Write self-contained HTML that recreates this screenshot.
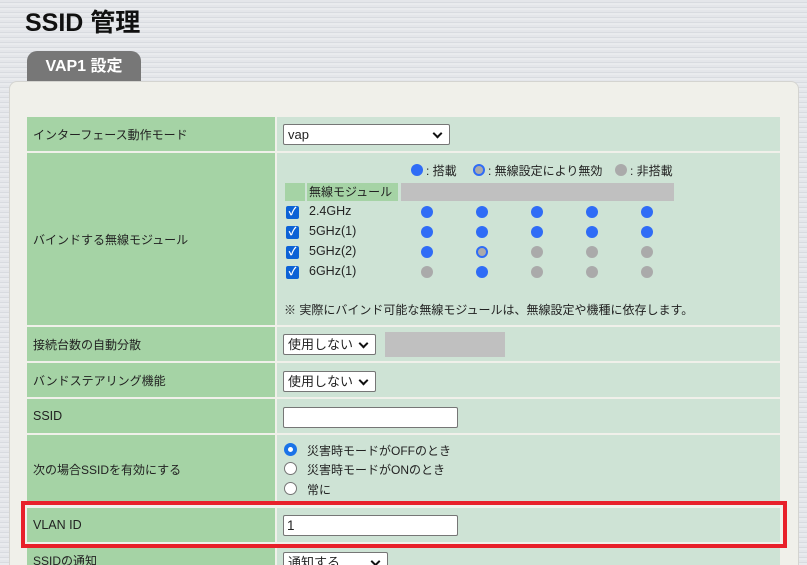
<!DOCTYPE html>
<html><head><meta charset="utf-8"><style>
*{box-sizing:border-box;margin:0;padding:0}
html,body{width:807px;height:565px;overflow:hidden}
body{position:relative;font-family:"Liberation Sans","Noto Sans CJK JP",sans-serif;font-size:12px;color:#222;white-space:nowrap;
background:repeating-linear-gradient(180deg,#e4e6ea 0,#e4e6ea 2px,#d8dbe0 2px,#d8dbe0 3px,#e9ebee 3px,#e9ebee 5px);}
.a{position:absolute}
.lt{font-size:12.5px}
h1{position:absolute;left:25px;top:3px;font-size:25px;font-weight:bold;color:#111}
.tab{left:27px;top:51px;width:114px;height:31px;background:#777;border-radius:10px 10px 0 0;color:#fff;font-weight:bold;font-size:16px;text-align:center;line-height:31px}
.panel{left:9px;top:81px;width:790px;height:500px;background:#f0f0ea;border:1px solid #d4d4d0;border-radius:8px}
.l{position:absolute;left:27px;width:248px;background:#a5d3a5;padding-left:6px;display:flex;align-items:center}
.v{position:absolute;left:277px;width:503px;background:#cee3d5}
.sel{position:absolute;background:#fff;border:1px solid #767676;border-radius:2px;height:21px;padding-left:4px;line-height:19px;font-size:13px}
.sel:after{content:"";position:absolute;right:8px;top:5px;width:5px;height:5px;border-right:2px solid #111;border-bottom:2px solid #111;transform:rotate(45deg)}
.inp{position:absolute;background:#fff;border:1px solid #767676;border-radius:2px;height:21px;padding-left:3px;line-height:19px;font-size:13.5px}
.d{position:absolute;width:12px;height:12px;border-radius:50%;background:#2f6cf6}
.g{background:#aaa}
.r{background:#aaa;border:2px solid #2f6cf6}
.cb{position:absolute;left:286px;width:13px;height:13px;background:#0b62d6;border-radius:2px;color:#fff;font-size:11px;line-height:13px;text-align:center;font-weight:bold}
.rd{position:absolute;left:284px;width:13px;height:13px;border-radius:50%;border:1px solid #767676;background:#fff}
</style></head><body>
<h1>SSID 管理</h1>
<div class="a tab">VAP1 設定</div>
<div class="a panel"></div>

<div class="l" style="top:117px;height:34px">インターフェース動作モード</div>
<div class="v" style="top:117px;height:34px"></div>
<div class="sel" style="left:283px;top:124px;width:167px">vap</div>

<div class="l" style="top:153px;height:172px">バインドする無線モジュール</div>
<div class="v" style="top:153px;height:172px"></div>
<div class="d" style="left:411px;top:164px"></div><div class="a" style="left:426px;top:162px">: 搭載</div>
<div class="d r" style="left:473px;top:164px"></div><div class="a" style="left:488px;top:162px">: 無線設定により無効</div>
<div class="d g" style="left:615px;top:164px"></div><div class="a" style="left:630px;top:162px">: 非搭載</div>
<div class="a" style="left:285px;top:183px;width:20px;height:18px;background:#a5d3a5"></div>
<div class="a" style="left:307px;top:183px;width:91px;height:18px;background:#a5d3a5;padding-left:2px;line-height:18px">無線モジュール</div>
<div class="a" style="left:401px;top:183px;width:273px;height:18px;background:#c0c0c0"></div>
<div class="cb" style="top:206px">✓</div><div class="a lt" style="left:309px;top:204px">2.4GHz</div>
<div class="cb" style="top:226px">✓</div><div class="a lt" style="left:309px;top:224px">5GHz(1)</div>
<div class="cb" style="top:246px">✓</div><div class="a lt" style="left:309px;top:244px">5GHz(2)</div>
<div class="cb" style="top:266px">✓</div><div class="a lt" style="left:309px;top:264px">6GHz(1)</div>
<div class="d" style="left:421px;top:206px"></div><div class="d" style="left:476px;top:206px"></div><div class="d" style="left:531px;top:206px"></div><div class="d" style="left:586px;top:206px"></div><div class="d" style="left:641px;top:206px"></div>
<div class="d" style="left:421px;top:226px"></div><div class="d" style="left:476px;top:226px"></div><div class="d" style="left:531px;top:226px"></div><div class="d" style="left:586px;top:226px"></div><div class="d" style="left:641px;top:226px"></div>
<div class="d" style="left:421px;top:246px"></div><div class="d r" style="left:476px;top:246px"></div><div class="d g" style="left:531px;top:246px"></div><div class="d g" style="left:586px;top:246px"></div><div class="d g" style="left:641px;top:246px"></div>
<div class="d g" style="left:421px;top:266px"></div><div class="d" style="left:476px;top:266px"></div><div class="d g" style="left:531px;top:266px"></div><div class="d g" style="left:586px;top:266px"></div><div class="d g" style="left:641px;top:266px"></div>
<div class="a" style="left:284px;top:301px">※ 実際にバインド可能な無線モジュールは、無線設定や機種に依存します。</div>

<div class="l" style="top:327px;height:34px">接続台数の自動分散</div>
<div class="v" style="top:327px;height:34px"></div>
<div class="sel" style="left:283px;top:334px;width:93px">使用しない</div>
<div class="a" style="left:385px;top:332px;width:120px;height:25px;background:#c0c0c0"></div>

<div class="l" style="top:363px;height:34px">バンドステアリング機能</div>
<div class="v" style="top:363px;height:34px"></div>
<div class="sel" style="left:283px;top:371px;width:93px">使用しない</div>

<div class="l lt" style="top:399px;height:34px">SSID</div>
<div class="v" style="top:399px;height:34px"></div>
<div class="inp" style="left:283px;top:407px;width:175px"></div>

<div class="l" style="top:435px;height:68px">次の場合SSIDを有効にする</div>
<div class="v" style="top:435px;height:68px"></div>
<div class="rd" style="top:443px;border:4px solid #1a73e8"></div><div class="a" style="left:307px;top:442px">災害時モードがOFFのとき</div>
<div class="rd" style="top:462px"></div><div class="a" style="left:307px;top:461px">災害時モードがONのとき</div>
<div class="rd" style="top:482px"></div><div class="a" style="left:307px;top:481px">常に</div>

<div class="l lt" style="top:508px;height:34px">VLAN ID</div>
<div class="v" style="top:508px;height:34px"></div>
<div class="inp" style="left:283px;top:515px;width:175px">1</div>

<div class="l" style="top:546px;height:30px;align-items:flex-start;padding-top:6px">SSIDの通知</div>
<div class="v" style="top:546px;height:30px"></div>
<div class="sel" style="left:283px;top:552px;width:105px">通知する</div>

<div class="a" style="left:21px;top:501px;width:766px;height:47px;border:4px solid #e8202a"></div>
</body></html>
